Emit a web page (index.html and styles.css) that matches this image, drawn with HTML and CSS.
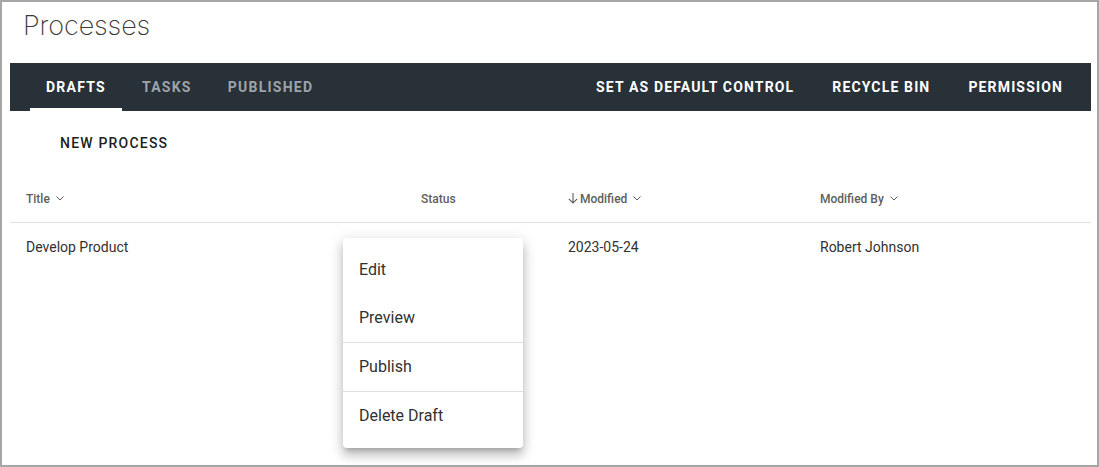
FILE: index.html
```html
<!DOCTYPE html>
<html>
<head>
<meta charset="utf-8">
<link rel="stylesheet" href="styles.css">
</head>
<body>
<div class="frame">
  <h1 class="page-title">Processes</h1>
  <nav class="toolbar">
    <div class="tabs">
      <span class="tab tab-active">DRAFTS</span>
      <span class="tab">TASKS</span>
      <span class="tab">PUBLISHED</span>
    </div>
    <div class="actions">
      <span class="action">SET AS DEFAULT CONTROL</span>
      <span class="action">RECYCLE BIN</span>
      <span class="action">PERMISSION</span>
    </div>
  </nav>
  <div class="command-row">
    <span class="new-btn">NEW PROCESS</span>
  </div>
  <div class="table">
    <div class="row head">
      <div class="cell">Title <svg class="chev" viewBox="0 0 8 5" width="8" height="5"><path d="M0.5 0.5 L4 4 L7.5 0.5" fill="none" stroke="currentColor" stroke-width="1"/></svg></div>
      <div class="cell">Status</div>
      <div class="cell"><svg class="arrow" viewBox="0 0 10 11" width="10" height="11"><path d="M5 0 V10 M0.8 5.8 L5 10 L9.2 5.8" fill="none" stroke="currentColor" stroke-width="1.1"/></svg>Modified <svg class="chev" viewBox="0 0 8 5" width="8" height="5"><path d="M0.5 0.5 L4 4 L7.5 0.5" fill="none" stroke="currentColor" stroke-width="1"/></svg></div>
      <div class="cell">Modified By <svg class="chev" viewBox="0 0 8 5" width="8" height="5"><path d="M0.5 0.5 L4 4 L7.5 0.5" fill="none" stroke="currentColor" stroke-width="1"/></svg></div>
    </div>
    <div class="row body-row">
      <div class="cell">Develop Product</div>
      <div class="cell status-cell">
        <div class="menu">
          <div class="menu-item">Edit</div>
          <div class="menu-item">Preview</div>
          <div class="menu-sep"></div>
          <div class="menu-item">Publish</div>
          <div class="menu-sep"></div>
          <div class="menu-item">Delete Draft</div>
        </div>
      </div>
      <div class="cell">2023-05-24</div>
      <div class="cell">Robert Johnson</div>
    </div>
  </div>
</div>
</body>
</html>
```

FILE: styles.css
```css
html, body {
  margin: 0;
  padding: 0;
  background: #ffffff;
}
body {
  font-family: Roboto, "Liberation Sans", sans-serif;
  color: #323130;
}
.frame {
  width: 1099px;
  height: 467px;
  box-sizing: border-box;
  border: 2px solid #a6a6a6;
  padding: 0 6px 0 8px;
  overflow: hidden;
}
.page-title {
  margin: 0;
  height: 61px;
  padding-left: 13px;
  font-family: Inter, Roboto, sans-serif;
  font-size: 27px;
  font-weight: 200;
  letter-spacing: -0.1px;
  line-height: 48px;
  color: #3b3a39;
}
.toolbar {
  height: 48px;
  background: #283038;
  display: flex;
  justify-content: space-between;
  align-items: stretch;
  padding: 0 9px 0 20px;
}
.tabs, .actions {
  display: flex;
  align-items: stretch;
}
.tabs {
  gap: 4px;
}
.tab, .action {
  display: flex;
  align-items: center;
  padding: 0 16px;
  font-size: 14px;
  font-weight: 700;
  letter-spacing: 1.25px;
  color: #9ea3a8;
  box-sizing: border-box;
}
.tab-active {
  color: #ffffff;
  border-bottom: 3px solid #ffffff;
  padding-top: 3px;
}
.action {
  color: #ffffff;
  padding: 0 19px;
  letter-spacing: 1.15px;
}
.command-row {
  height: 63px;
  display: flex;
  align-items: center;
  padding-left: 34px;
}
.new-btn {
  padding: 0 16px;
  font-size: 14px;
  font-weight: 500;
  letter-spacing: 1.2px;
  color: #201f1e;
  padding-top: 1px;
}
.row {
  display: grid;
  grid-template-columns: 395px 147px 252px 1fr;
}
.head {
  height: 48px;
  border-bottom: 1px solid #e1dfdd;
  font-size: 12px;
  font-weight: 500;
  color: #605e5c;
}
.body-row {
  height: 50px;
  font-size: 14px;
  color: #323130;
}
.body-row .cell {
  padding-bottom: 2px;
}
.cell {
  display: flex;
  align-items: center;
  padding-left: 16px;
}
.head .cell {
  padding-top: 1px;
}
.chev {
  margin-left: 6px;
  color: #605e5c;
}
.arrow {
  margin-right: 2px;
  color: #605e5c;
}
.status-cell {
  position: relative;
  padding-left: 0;
}
.menu {
  position: absolute;
  left: -62px;
  top: 15px;
  width: 180px;
  padding: 8px 0;
  background: #ffffff;
  border-radius: 4px;
  box-shadow: 0 5px 5px -3px rgba(0,0,0,0.2), 0 8px 10px 1px rgba(0,0,0,0.14), 0 3px 14px 2px rgba(0,0,0,0.12);
  z-index: 5;
}
.menu-item {
  height: 48px;
  box-sizing: border-box;
  padding-bottom: 2px;
  display: flex;
  align-items: center;
  padding-left: 16px;
  font-size: 16px;
  color: #323130;
}
.menu-sep {
  height: 1px;
  background: #e1dfdd;
}
```
